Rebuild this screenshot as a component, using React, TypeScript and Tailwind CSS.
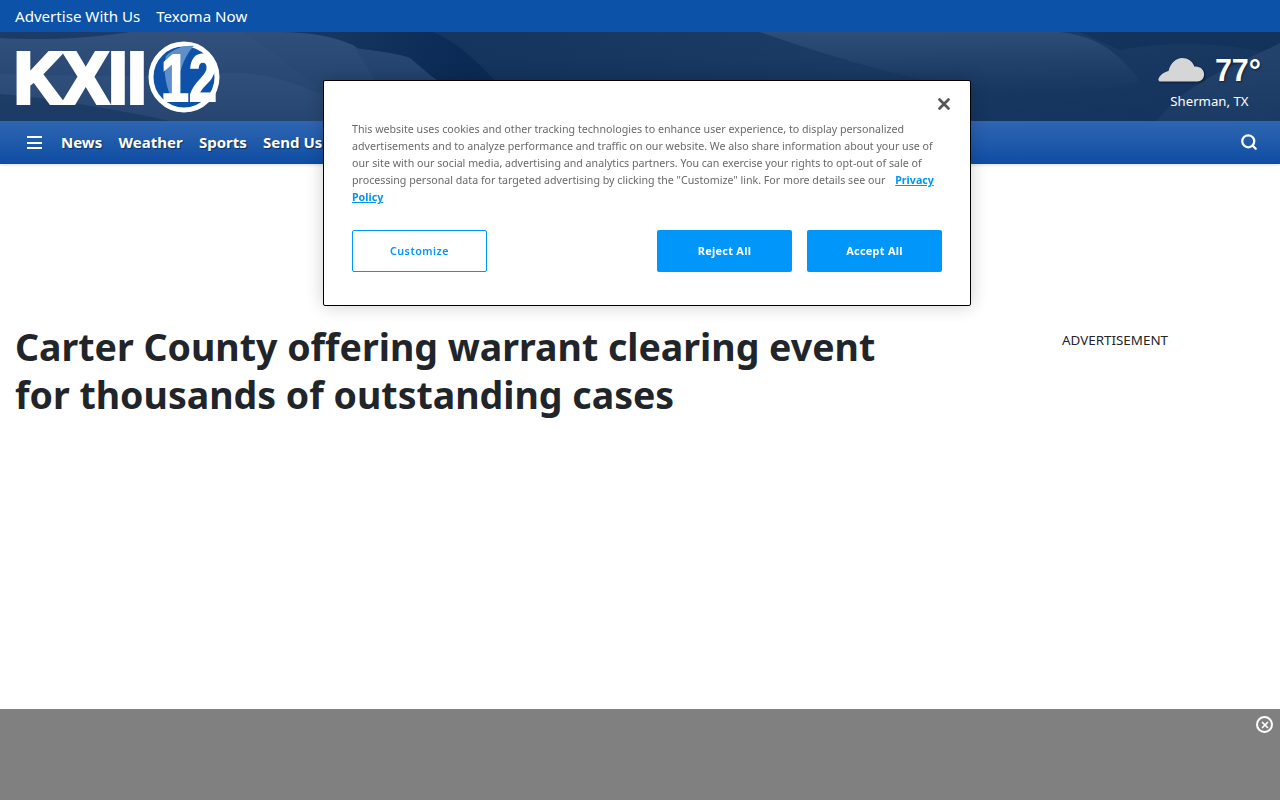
import { Search, X } from "lucide-react";

const sans = "font-['Noto_Sans','Open_Sans',sans-serif]";

function HeaderWaves() {
  return (
    <svg className="absolute inset-0 h-full w-full" viewBox="0 0 1280 89" preserveAspectRatio="none">
      <defs>
        <linearGradient id="base" x1="0" x2="1" y1="0" y2="0">
          <stop offset="0" stopColor="#1f3f6b" />
          <stop offset="0.25" stopColor="#173761" />
          <stop offset="0.36" stopColor="#0b2b56" />
          <stop offset="1" stopColor="#0e2e58" />
        </linearGradient>
        <linearGradient id="midBlue" x1="0" x2="1" y1="0" y2="0">
          <stop offset="0" stopColor="#15355f" />
          <stop offset="0.5" stopColor="#1d3d67" />
          <stop offset="1" stopColor="#193860" />
        </linearGradient>
        <linearGradient id="hill" x1="0" x2="0" y1="0" y2="1">
          <stop offset="0" stopColor="#3a5a84" stopOpacity="0.6" />
          <stop offset="1" stopColor="#3a5a84" stopOpacity="0" />
        </linearGradient>
        <linearGradient id="shade" x1="0" x2="0" y1="0" y2="1">
          <stop offset="0" stopColor="#0b2a55" stopOpacity="0" />
          <stop offset="1" stopColor="#0b2a55" stopOpacity="0.4" />
        </linearGradient>
      </defs>
      <rect width="1280" height="89" fill="url(#base)" />
      <path d="M433 0C465 14 482 36 503 56L540 89H1280V0Z" fill="url(#midBlue)" />
      <path d="M0 0H280C310 0 335 5 353 13C370 24 385 38 400 48L430 89H0Z" fill="#2f4f7a" />
      <path d="M355 16C385 20 400 22 410 26C420 34 428 42 437 48L470 89H400Z" fill="#2a4a75" />
      <path d="M243 0C262 12 285 30 323 59C345 72 365 82 385 89H0V0Z" fill="#35557f" opacity="0.45" />
      <path d="M0 42C90 44 170 46 225 41C270 38 320 58 370 89H0Z" fill="#4a6a94" opacity="0.3" />
      <path d="M0 62C50 66 120 78 170 89H0Z" fill="#16365f" opacity="0.55" />
      <path d="M0 6C30 8 80 8 130 0H0Z" fill="#1c3c67" />
      <path d="M760 0H1060C1090 4 1115 14 1140 50C1050 70 960 70 760 0Z" fill="url(#hill)" />
      <path d="M1120 18C1170 8 1230 10 1280 24V0H1080Z" fill="#14325a" opacity="0.85" />
      <path d="M1157 89C1185 50 1240 32 1280 11V89Z" fill="#2c4b74" opacity="0.7" />
      <rect width="1280" height="89" fill="url(#shade)" />
    </svg>
  );
}

function Logo() {
  return (
    <svg width="210" height="84" viewBox="-4 -4 210 84" className="block">
      <text
        transform="translate(-2 63) scale(0.945 1)"
        fontFamily="Liberation Sans, sans-serif"
        fontWeight="700"
        fontSize="72"
        fill="#fff"
        stroke="#fff"
        strokeWidth="4"
      >
        KXII
      </text>
      <circle cx="168" cy="37" r="33" fill="#0d52a8" stroke="#fff" strokeWidth="5" />
      <path d="M150 16C158 8 170 5 178 6C167 16 161 40 158 62C151 52 146 30 150 16Z" fill="#5f8fcb" />
      <text
        transform="translate(145 61) scale(0.76 1)"
        fontFamily="Liberation Sans, sans-serif"
        fontWeight="700"
        fontSize="66"
        fill="#fff"
        stroke="#fff"
        strokeWidth="2"
      >
        12
      </text>
    </svg>
  );
}

function CloudIcon() {
  return (
    <svg width="48" height="26" viewBox="0 0 50 27" className="block drop-shadow-[1px_1px_1px_rgba(0,0,0,0.5)]">
      <path
        d="M3 25.5C1 25.5 0 24 .5 22.5C2 19 6 15.5 11 14.5C13 6 19 1 25 1C31 1 36 4.5 38 10C44 9.5 48 13.5 48 18C48 22.5 45 25.5 41 25.5Z"
        fill="#d6d6d6"
      />
    </svg>
  );
}

function CookieDialog() {
  return (
    <div className={`fixed left-[323px] top-[80px] z-20 w-[648px] h-[226px] rounded-[2px] border border-black bg-white shadow-[0_0_18px_rgba(0,0,0,0.2)] ${sans}`}>
      <div className="flex justify-end pr-[17px] pt-[14px] h-[40px]">
        <X className="w-[18px] h-[18px] text-[#565656]" strokeWidth={3.6} />
      </div>
      <div className="pl-[28px] pr-[28px]">
        <p className="text-[10.66px] leading-[17px] text-[#696969] whitespace-nowrap">
          This website uses cookies and other tracking technologies to enhance user experience, to display personalized
          <br />
          advertisements and to analyze performance and traffic on our website. We also share information about your use of
          <br />
          our site with our social media, advertising and analytics partners. You can exercise your rights to opt-out of sale of
          <br />
          processing personal data for targeted advertising by clicking the "Customize" link. For more details see our{" "}
          <a className="ml-[7px] font-bold text-[#0095f0] underline">Privacy</a>
          <br />
          <a className="font-bold text-[#0095f0] underline">Policy</a>
        </p>
        <div className="mt-[24px] flex items-center">
          <button className="w-[135px] h-[42px] rounded-[2px] border border-[#0096fa] bg-white text-[10.7px] font-semibold tracking-[0.5px] text-[#0096fa]">
            Customize
          </button>
          <div className="ml-auto flex gap-[15px]">
            <button className="w-[135px] h-[42px] rounded-[2px] bg-[#0096fa] text-[10.9px] font-bold tracking-[0.3px] text-white">
              Reject All
            </button>
            <button className="w-[135px] h-[42px] rounded-[2px] bg-[#0096fa] text-[10.9px] font-bold tracking-[0.3px] text-white">
              Accept All
            </button>
          </div>
        </div>
      </div>
    </div>
  );
}

export default function App() {
  const navItems = ["News", "Weather", "Sports", "Send Us"];

  return (
    <div className={`min-h-screen bg-white ${sans}`}>
      <div className="flex h-[32px] items-center gap-[16px] bg-[#0b52a8] px-[15px] text-[15.1px] text-white">
        <a>Advertise With Us</a>
        <a>Texoma Now</a>
      </div>

      <header className="relative h-[89px] overflow-hidden">
        <HeaderWaves />
        <div className="relative flex h-full items-start justify-between pl-[12px] pr-[19px]">
          <div className="pt-[4px]">
            <Logo />
          </div>
          <div className="flex flex-col items-center pt-[19px]">
            <div className="flex items-center gap-[9px]">
              <CloudIcon />
              <span className="font-['Liberation_Sans',sans-serif] text-[30.5px] font-bold leading-[38px] text-white [text-shadow:1px_1px_2px_rgba(0,0,0,0.5)]">
                77°
              </span>
            </div>
            <span className="mt-[3px] text-[13.2px] leading-[18px] text-white">Sherman, TX</span>
          </div>
        </div>
      </header>

      <nav className="flex h-[43px] items-center bg-gradient-to-b from-[#2e66b2] to-[#0d4da3] pl-[27px] pr-[22px] shadow-[0_1px_3px_rgba(0,0,0,0.15)]">
        <div className="mr-[19px] flex w-[15px] flex-col gap-[3.5px]">
          <span className="h-[2px] bg-white" />
          <span className="h-[2px] bg-white" />
          <span className="h-[2px] bg-white" />
        </div>
        <div className="flex gap-[16.3px] text-[15px] font-bold text-white [text-shadow:1px_1px_1px_rgba(0,0,0,0.45)]">
          {navItems.map((item) => (
            <a key={item}>{item}</a>
          ))}
        </div>
        <Search className="ml-auto mb-[2px] w-[18px] h-[18px] text-white" strokeWidth={3} />
      </nav>

      <main className="flex pt-[159px] pl-[15px]">
        <h1 className="w-[900px] text-[37.5px] font-bold leading-[48px] text-[#212529]">
          Carter County offering warrant clearing event for thousands of outstanding cases
        </h1>
        <div className="ml-[147px] pt-[7px] text-[13.4px] leading-[20px] text-[#212529]">ADVERTISEMENT</div>
      </main>

      <CookieDialog />

      <div className="fixed bottom-0 left-0 right-0 z-10 flex h-[91px] justify-end bg-[#808080] pr-[7px] pt-[7px]">
        <span className="flex h-[17px] w-[17px] items-center justify-center rounded-full border-2 border-white">
          <X className="w-[10px] h-[10px] text-white" strokeWidth={4} />
        </span>
      </div>
    </div>
  );
}
